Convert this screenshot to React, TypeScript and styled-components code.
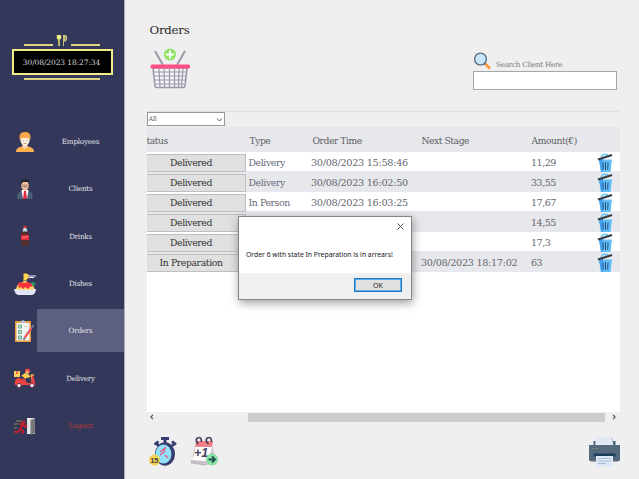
import React from "react";
import styled, { createGlobalStyle } from "styled-components";

const slab = `"DejaVu Serif", "Liberation Serif", serif`;

const GlobalStyle = createGlobalStyle`
  * { box-sizing: border-box; }
  body { margin: 0; background: #efefef; font-family: ${slab}; overflow: hidden; }
  svg { display: block; flex: none; }
`;

const Window = styled.div`
  position: relative;
  display: flex;
  width: 639px;
  height: 479px;
  background: #efefef;
`;

const Text = styled.span<{ $size: number; $track?: number; $color?: string }>`
  font-size: ${(p) => p.$size}px;
  letter-spacing: ${(p) => p.$track ?? 0}px;
  color: ${(p) => p.$color ?? "#66666b"};
  line-height: 1.2;
  white-space: nowrap;
`;

/* Sidebar */
const Sidebar = styled.aside`
  flex: none;
  width: 125px;
  height: 479px;
  background: #333759;
  border-right: 1px solid #a9aabb;
`;

const Brand = styled.header`
  display: flex;
  flex-direction: column;
  align-items: center;
  height: 118px;
  padding-top: 34px;
`;

const BrandTop = styled.div`
  display: flex;
  align-items: flex-end;
  justify-content: space-between;
  width: 76px;
  height: 13px;
`;

const Rule = styled.div<{ $width: number }>`
  width: ${(p) => p.$width}px;
  height: 2px;
  margin-bottom: 1px;
  background: #ded683;
`;

const Clock = styled.div`
  display: flex;
  align-items: center;
  justify-content: center;
  width: 101px;
  height: 26px;
  margin: 2px 0 3px;
  padding-right: 1px;
  background: #000;
  border: 2px solid #f2ee85;
`;

const Nav = styled.nav`
  display: flex;
  flex-direction: column;
`;

const NavItem = styled.div`
  display: flex;
  align-items: center;
  height: 47.35px;
`;

const NavIcon = styled.div`
  display: flex;
  justify-content: flex-end;
  width: 37px;
`;

const NavGlyph = styled.div`
  display: flex;
  justify-content: center;
  width: 24px;
`;

const NavLabel = styled.div<{ $active?: boolean }>`
  display: flex;
  flex: 1;
  align-items: center;
  justify-content: center;
  height: 43px;
  padding-top: 2px;
  margin-top: -1px;
  background: ${(p) => (p.$active ? "#5c5f80" : "transparent")};
`;

/* Main area */
const Main = styled.main`
  display: flex;
  flex-direction: column;
  width: 514px;
  padding: 0 20px 0 21.500px;
`;

const TopBar = styled.section`
  display: flex;
  justify-content: space-between;
  height: 112px;
  border-bottom: 1px solid #dedede;
`;

const TitleBlock = styled.div`
  display: flex;
  flex-direction: column;
  gap: 11px;
  padding: 23px 0 0 3px;
`;

const SearchBlock = styled.div`
  width: 146px;
  padding: 52px 2px 0 0;
`;

const SearchCaption = styled.div`
  display: flex;
  align-items: flex-end;
  gap: 5px;
  height: 19px;
  padding-bottom: 1px;
`;

const SearchInput = styled.input`
  display: block;
  width: 144px;
  height: 19px;
  padding: 0 4px;
  background: #fff;
  border: 1px solid #a6a6a6;
  outline: none;
`;

const Select = styled.div`
  display: flex;
  align-items: center;
  justify-content: space-between;
  width: 78px;
  height: 14px;
  padding: 1px 1px 0 1px;
  background: #fff;
  border: 1px solid #979797;
`;

const Table = styled.div`
  width: 473px;
  height: 285px;
  margin-top: 1px;
  overflow: hidden;
  background: #fff;
`;

const HeadRow = styled.div`
  display: grid;
  grid-template-columns: 103px 63px 109px 110px 88px;
  align-items: center;
  height: 25px;
  padding-top: 3px;
  background: #e7e8ec;
`;

const Row = styled.div<{ $alt: boolean }>`
  display: grid;
  grid-template-columns: 102px 62.500px 110px 110px 65.500px 19px;
  align-items: center;
  height: 20px;
  padding-top: 1px;
  background: ${(p) => (p.$alt ? "#e7e8ec" : "#fff")};
  border-bottom: 1px solid #e6e6f5;
`;

const StatusButton = styled.div`
  display: flex;
  align-items: center;
  justify-content: center;
  width: 99px;
  height: 18px;
  padding-right: 9px;
  background: #e0e0e0;
  border: 1px solid #bfbfc3;
  border-left: 0;
`;

const ScrollBar = styled.div`
  display: flex;
  align-items: center;
  width: 473px;
  height: 10px;
  padding: 0 3px 0 2px;
`;

const Thumb = styled.div`
  width: 359px;
  height: 9px;
  margin-left: 93.500px;
  margin-right: 5.500px;
  background: #cdcdcd;
`;

const Actions = styled.footer`
  display: flex;
  align-items: flex-start;
  gap: 10px;
  padding: 14px 0 0 2px;
`;

const PrintSlot = styled.div`
  margin-left: auto;
  margin-right: -2px;
`;

/* Message box */
const Dialog = styled.div`
  position: absolute;
  left: 238px;
  top: 216px;
  display: flex;
  flex-direction: column;
  width: 174px;
  height: 84px;
  background: #fff;
  border: 1px solid #858585;
  box-shadow: 1px 3px 9px rgba(0, 0, 0, 0.38);
  font-family: "Noto Sans", "Open Sans", sans-serif;
`;

const DialogTitle = styled.div`
  display: flex;
  justify-content: flex-end;
  padding: 6px 7px 0 0;
  height: 34px;
`;

const DialogBody = styled.div`
  display: flex;
  flex: 1;
  align-items: flex-start;
  padding-left: 7px;
`;

const DialogFooter = styled.div`
  display: flex;
  justify-content: flex-end;
  height: 26px;
  padding: 5px 9px 0 0;
  background: #f0f0f0;
`;

const OkButton = styled.div`
  display: flex;
  align-items: center;
  justify-content: center;
  width: 48px;
  height: 14px;
  padding-top: 2px;
  background: #e1e1e1;
  border: 1px solid #1a78cc;
  box-shadow: inset 0 0 0 1px #63a9e2;
`;

/* Icons */
const CutleryIcon = () => (
  <svg width="12" height="13" viewBox="0 0 12 13">
    <path d="M1.500 1v3q0 1 1.500 1t1.500-1V1M3 1v11" fill="#f2ee85" stroke="#f2ee85" strokeWidth="1.400" />
    <path d="M7.500 1v11M8 1.500h2q1 1 .6 4l-1 1.500H8z" fill="#aaa670" stroke="#d8d37c" strokeWidth="0.900" />
  </svg>
);

const EmployeeIcon = () => (
  <svg width="22" height="22" viewBox="0 0 22 22">
    <path d="M2 21q0-4 4-5l3-1h4l3 1q4 1 4 5z" fill="#ffb04f" />
    <path d="M8.500 13h5v3L11 18l-2.500-2z" fill="#f7d6ba" />
    <ellipse cx="11" cy="9" rx="4.600" ry="5.700" fill="#fff0dc" />
    <path d="M5.500 9V6q0-5 5.500-5t5.500 5v3l-1.500-2H7z" fill="#ffa94a" />
    <path d="M9 9v1M13 9v1M9.500 12q1.500 1 3 0" stroke="#9d8272" strokeWidth="0.800" fill="none" />
  </svg>
);

const ClientIcon = () => (
  <svg width="22" height="22" viewBox="0 0 22 22">
    <path d="M3.500 21v-4q0-3 4-4h7q4 1 4 4v4z" fill="#4b6076" />
    <path d="M7.500 12h7L13 21H9z" fill="#fff" />
    <path d="M10 13h2l1 8H9z" fill="#e52b3f" />
    <ellipse cx="11" cy="7.500" rx="4" ry="5" fill="#efbe9e" />
    <path d="M6.500 7q-.5-6 4.500-6t4.500 6L14 4H9z" fill="#20252f" />
    <path d="M7.500 7h3v2h-3zM11.500 7h3v2h-3z" fill="none" stroke="#8a6862" strokeWidth="0.600" />
  </svg>
);

const DrinkIcon = () => (
  <svg width="10" height="22" viewBox="0 0 10 22">
    <path d="M3.500 1h3v4l2.500 5-1 3 1 3-1 5H2l-1-5 1-3-1-3 2.500-5z" fill="#552d2d" />
    <path d="M3.500 1h3v2h-3z" fill="#e82a38" />
    <path d="M3.500 3h3l1 3.500h-5z" fill="#bdd8dc" />
    <path d="M1 10h8v5H1z" fill="#e62c3b" />
    <path d="M2 13l6-1.500" stroke="#f09097" />
  </svg>
);

const DishIcon = () => (
  <svg width="24" height="24" viewBox="0 0 24 24">
    <path d="M2.500 18l2.500-6 7-3 8 4 2 5z" fill="#ffd062" />
    <path d="M5 12l2-2 4 1 4-1 4 2 1 2-3 1-2 2-3-2-2 2-2-2-2 1z" fill="#f4333f" />
    <path d="M18 11l1.500-1 3 1-1 3-2.500-1z" fill="#2c9d62" />
    <path d="M10.500 10V1.500h3l2 1v4l-2 1v2.500h-1V8h-1v2z" fill="#ffd34c" />
    <path d="M15 4h8M16 5.500h5" stroke="#eef0fa" />
    <path d="M1 17h3q2 2 4 0 2 2 4 0 2 2 4 0 2 2 4 0h3q-.5 6-5 6H6q-4 0-5-6z" fill="#e1e5f5" />
  </svg>
);

const OrderIcon = () => (
  <svg width="22" height="24" viewBox="0 0 22 24">
    <path d="M1 2h16v21H1z" fill="#e99c3e" />
    <path d="M2.500 4h13v17.500h-13z" fill="#f3f5f4" />
    <path d="M6 4q0-2 3-3 3 1 3 3z" fill="#b7bccb" />
    <path d="M4.500 6h3v3h-3zM4.500 11.500h3v3h-3zM4.500 17h3v3h-3z" fill="#c6e4d5" stroke="#65a889" />
    <path d="M9.500 7.500h4M9.500 13h2" stroke="#d5dadd" />
    <path d="M17.500 9l-7 10" stroke="#ed5b62" strokeWidth="2.200" />
    <path d="M19.500 6l-2 3M10.500 19l-.7 2" stroke="#747c93" strokeWidth="2" />
  </svg>
);

const DeliveryIcon = () => (
  <svg width="24" height="22" viewBox="0 0 24 22">
    <path d="M1 4h6v6H1z" fill="#ffd15e" />
    <path d="M3 4h2v3H3z" fill="#ee6a50" />
    <circle cx="14.500" cy="4" r="2.600" fill="#ef4943" />
    <path d="M13 4h2.500v2.500H13z" fill="#f7be8c" />
    <path d="M8 9l4-3 3 1 3 3-5 1-1 2h-2l1-3z" fill="#ffcf4e" />
    <path d="M18.500 8l1 8M17.500 8H21" stroke="#faab45" strokeWidth="1.300" />
    <path d="M2 18q-1-7 4-7h5l3 5h4l1-7h1.500l2 9z" fill="#ef4342" />
    <path d="M7 11h5v1.500H7z" fill="#823641" />
    <g fill="#f6f3f4" stroke="#75394a" strokeWidth="1"><circle cx="6" cy="18.500" r="2.100" /><circle cx="19" cy="18.500" r="2.100" /></g>
  </svg>
);

const LogoutIcon = () => (
  <svg width="24" height="22" viewBox="0 0 24 22">
    <path d="M14 3h8v16h-8z" fill="#e5e5e5" />
    <path d="M17.500 5L22 3v15l-4.500 2z" fill="#77797b" />
    <path d="M3 6h6M1 9h4M1 13h3" stroke="#8d8b58" />
    <circle cx="11" cy="7" r="1.600" fill="#d41e2c" />
    <path d="M10 9l-3 5 3 2-1 3M7 14l-2 3H1M6 9h4l2 3 2-2" fill="none" stroke="#c01e2c" strokeWidth="2" />
  </svg>
);

const BasketIcon = () => (
  <svg width="42" height="41" viewBox="0 0 42 41">
    <path d="M5 3l8 14M35 3l-8 14" stroke="#9999ab" strokeWidth="2" />
    <path d="M3 20h34l-2 18q-.3 1.500-2 1.500H7Q5.300 39.500 5 38z" fill="#f5f5f8" stroke="#9999ab" strokeWidth="1.600" />
    <path d="M4 24h32M5 28h30M5 32h30M6 36h28M9 21l1 18M14 21l.5 18M19.500 21v18M24.500 21v18M29 21l-.5 18M33 21l-1.500 18" stroke="#9999ab" strokeWidth="1.200" />
    <rect x="0.500" y="16.500" width="39.500" height="4" rx="1.500" fill="#ff4f83" />
    <circle cx="20" cy="6.500" r="6" fill="#8ee464" />
    <path d="M20 2.500v8M16 6.500h8" stroke="#fff" strokeWidth="2" />
  </svg>
);

const SearchIcon = () => (
  <svg width="18" height="18" viewBox="0 0 18 18">
    <path d="M11 11l2 2" stroke="#607386" strokeWidth="2" />
    <path d="M12.500 12l4.500 4.500" stroke="#ff9733" strokeWidth="2.600" />
    <circle cx="7.500" cy="7" r="5.900" fill="#c7e5fb" stroke="#5d7082" strokeWidth="1.400" />
  </svg>
);

const TrashIcon = () => (
  <svg width="17" height="20" viewBox="0 0 17 20">
    <path d="M4 4l2-2.500h4l1 1" stroke="#66c6f3" fill="none" strokeWidth="1.300" />
    <path d="M2 6.500h13L13.500 19H4z" fill="#62bdf8" />
    <path d="M2 6.500l4-1v13L4 19z" fill="#45a1ef" />
    <path d="M6 9.500l.3 7M8.500 9v8M11 9.500l-.3 7" stroke="#244f72" strokeWidth="1" />
    <path d="M1 6.500L15 2" stroke="#333b43" strokeWidth="2.200" />
  </svg>
);

const StopwatchIcon = () => (
  <svg width="30" height="31" viewBox="0 0 30 31">
    <path d="M12 2.500h8M16 2v5" stroke="#383b70" strokeWidth="3" />
    <path d="M5.500 8.500l4-3M7 7l3 3M23 5.500l4 3M26 7l-3 3" stroke="#383b70" strokeWidth="2.800" />
    <ellipse cx="16" cy="18" rx="10" ry="11.800" fill="#383b70" />
    <ellipse cx="14.500" cy="18" rx="8" ry="9.500" fill="#91e2f7" />
    <path d="M11 16l5-4-1 4-4 3M16 19l3 3" stroke="#dd658d" strokeWidth="1.500" fill="none" />
    <circle cx="5.500" cy="24" r="5.500" fill="#f7d44d" />
    <text x="1.200" y="27" fontFamily="Liberation Sans, sans-serif" fontWeight="700" fontSize="7.500" fill="#41405e">15</text>
  </svg>
);

const CalendarIcon = () => (
  <svg width="30" height="31" viewBox="0 0 30 31">
    <path d="M7 5h17l-1 6H6z" fill="#f47e86" />
    <path d="M6 11h17l4 14-10 4-15-3 2-4z" fill="#d8d0d8" stroke="#b9b3bd" strokeWidth="0.700" />
    <path d="M6 11h17l-4 14-17-1q4-4 4-13z" fill="#fffafa" />
    <path d="M2 25l15 2M2 27l14 2" stroke="#9e98a6" strokeWidth="0.600" />
    <path d="M9.500 8Q5.500 4 8.500 2q4-2 4 4M19.500 8q-4-4-1-6 4-2 4 4" stroke="#454359" strokeWidth="1.700" fill="none" />
    <text x="5" y="20.500" fontFamily="Liberation Sans, sans-serif" fontStyle="italic" fontWeight="700" fontSize="12.500" fill="#3e3f62">+1</text>
    <circle cx="23" cy="23.500" r="5.600" fill="#8be9a7" stroke="#6dc68a" strokeWidth="0.600" />
    <path d="M19.500 23.500h6M23 20.500l3 3-3 3" stroke="#24534d" strokeWidth="1.900" fill="none" />
  </svg>
);

const PrinterIcon = () => (
  <svg width="33" height="31" viewBox="0 0 33 31">
    <path d="M5.500 10V5h3V2h16v3h3v5z" fill="#496279" />
    <path d="M8 1h16l1.500 9H7z" fill="#e1e7f3" />
    <path d="M1 9h31v14q0 2.500-3 2.500H4q-3 0-3-2.500z" fill="#54697c" />
    <path d="M5.500 17.500h22v3h-22z" fill="#183f5c" />
    <path d="M8 20h17v10.500H8z" fill="#dce8f7" />
    <path d="M10 22.500h13M10 25h13M10 27.500h8" stroke="#a9bdd1" strokeWidth="1" />
    <path d="M3 12.500h3M7 12.500h3" stroke="#71867a" />
  </svg>
);

const Chevron = ({ d, size = 7, weight = 1 }: { d: string; size?: number; weight?: number }) => (
  <svg width={size} height={size} viewBox="0 0 7 7">
    <path d={d} fill="none" stroke="#555" strokeWidth={weight} />
  </svg>
);

const navigation = [
  { label: "Employees", Icon: EmployeeIcon },
  { label: "Clients", Icon: ClientIcon },
  { label: "Drinks", Icon: DrinkIcon },
  { label: "Dishes", Icon: DishIcon },
  { label: "Orders", Icon: OrderIcon },
  { label: "Delivery", Icon: DeliveryIcon },
  { label: "Logout", Icon: LogoutIcon },
];

const orders = [
  ["Delivered", "Delivery", "30/08/2023 15:58:46", "", "11,29"],
  ["Delivered", "Delivery", "30/08/2023 16:02:50", "", "33,55"],
  ["Delivered", "In Person", "30/08/2023 16:03:25", "", "17,67"],
  ["Delivered", "", "", "", "14,55"],
  ["Delivered", "", "", "", "17,3"],
  ["In Preparation", "", "", "30/08/2023 18:17:02", "63"],
];

export default function App() {
  return (
    <>
      <GlobalStyle />
      <Window>
        <Sidebar>
          <Brand>
            <BrandTop>
              <Rule $width={29} />
              <CutleryIcon />
              <Rule $width={29} />
            </BrandTop>
            <Clock>
              <Text $size={7.5} $track={-0.1} $color="#d6d6d6">30/08/2023 18:27:34</Text>
            </Clock>
            <Rule $width={76} />
          </Brand>
          <Nav>
            {navigation.map(({ label, Icon }) => (
              <NavItem key={label}>
                <NavIcon><NavGlyph><Icon /></NavGlyph></NavIcon>
                <NavLabel $active={label === "Orders"}>
                  <Text $size={7.2} $track={-0.25} $color={label === "Logout" ? "#b83736" : "#e3e4ec"}>{label}</Text>
                </NavLabel>
              </NavItem>
            ))}
          </Nav>
        </Sidebar>
        <Main>
          <TopBar>
            <TitleBlock>
              <Text $size={11.8} $track={-0.25} $color="#292929">Orders</Text>
              <BasketIcon />
            </TitleBlock>
            <SearchBlock>
              <SearchCaption>
                <SearchIcon />
                <Text $size={7.2} $track={-0.22} $color="#777">Search Client Here</Text>
              </SearchCaption>
              <SearchInput aria-label="Search client" />
            </SearchBlock>
          </TopBar>
          <Select>
            <Text $size={6.5} $track={-0.2}>All</Text>
            <Chevron d="M1 2.500l2.500 2.500L6 2.500" />
          </Select>
          <Table>
            <HeadRow>
              {["tatus", "Type", "Order Time", "Next Stage", "Amount(€)"].map((h) => (
                <Text key={h} $size={9.2} $track={-0.45} $color="#606064">{h}</Text>
              ))}
            </HeadRow>
            {orders.map(([status, type, time, next, amount], i) => (
              <Row key={i} $alt={i % 2 === 1}>
                <StatusButton><Text $size={9.3} $track={-0.4} $color="#343434">{status}</Text></StatusButton>
                <Text $size={9.4} $track={-0.42} $color="#6a6a7c">{type}</Text>
                <Text $size={9.7} $track={-0.29} $color="#66666f">{time}</Text>
                <Text $size={9.7} $track={-0.32} $color="#66666f">{next}</Text>
                <Text $size={9.6} $track={-0.5} $color="#66666f">{amount}</Text>
                <TrashIcon />
              </Row>
            ))}
          </Table>
          <ScrollBar>
            <Chevron d="M4.500 1l-2.200 2.500 2.200 2.500" size={6} weight={1.4} />
            <Thumb />
            <Chevron d="M2.500 1l2.200 2.500-2.200 2.500" size={6} weight={1.4} />
          </ScrollBar>
          <Actions>
            <StopwatchIcon />
            <CalendarIcon />
            <PrintSlot><PrinterIcon /></PrintSlot>
          </Actions>
        </Main>
        <Dialog role="dialog">
          <DialogTitle>
            <svg width="7" height="7" viewBox="0 0 7 7"><path d="M.5.5l6 6M6.500.5l-6 6" stroke="#444" strokeWidth="0.900" /></svg>
          </DialogTitle>
          <DialogBody>
            <Text $size={6.8} $track={0.01} $color="#161616">Order 6 with state In Preparation is in arrears!</Text>
          </DialogBody>
          <DialogFooter>
            <OkButton><Text $size={7} $color="#222">OK</Text></OkButton>
          </DialogFooter>
        </Dialog>
      </Window>
    </>
  );
}
